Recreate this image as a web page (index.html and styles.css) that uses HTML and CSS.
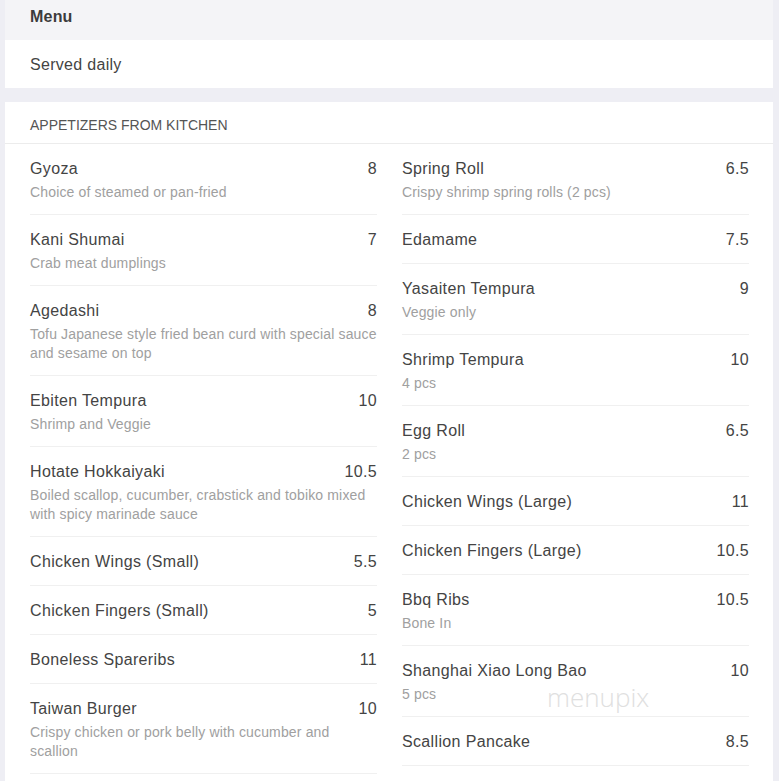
FILE: index.html
```html
<!DOCTYPE html>
<html lang="en">
<head>
<meta charset="utf-8">
<title>Menu</title>
<link rel="stylesheet" href="styles.css">
</head>
<body>
<div class="page">
  <div class="menu-head">Menu</div>
  <div class="card served">Served daily</div>
  <div class="card section">
    <div class="section-title">APPETIZERS FROM KITCHEN</div>
    <div class="columns">
      <div class="col">
        <div class="item"><div class="row"><span class="name">Gyoza</span><span class="price">8</span></div><div class="desc">Choice of steamed or pan-fried</div></div>
        <div class="item"><div class="row"><span class="name">Kani Shumai</span><span class="price">7</span></div><div class="desc">Crab meat dumplings</div></div>
        <div class="item"><div class="row"><span class="name">Agedashi</span><span class="price">8</span></div><div class="desc">Tofu Japanese style fried bean curd with special sauce and sesame on top</div></div>
        <div class="item"><div class="row"><span class="name">Ebiten Tempura</span><span class="price">10</span></div><div class="desc">Shrimp and Veggie</div></div>
        <div class="item"><div class="row"><span class="name">Hotate Hokkaiyaki</span><span class="price">10.5</span></div><div class="desc">Boiled scallop, cucumber, crabstick and tobiko mixed with spicy marinade sauce</div></div>
        <div class="item"><div class="row"><span class="name">Chicken Wings (Small)</span><span class="price">5.5</span></div></div>
        <div class="item"><div class="row"><span class="name">Chicken Fingers (Small)</span><span class="price">5</span></div></div>
        <div class="item"><div class="row"><span class="name">Boneless Spareribs</span><span class="price">11</span></div></div>
        <div class="item"><div class="row"><span class="name">Taiwan Burger</span><span class="price">10</span></div><div class="desc">Crispy chicken or pork belly with cucumber and scallion</div></div>
      </div>
      <div class="col">
        <div class="item"><div class="row"><span class="name">Spring Roll</span><span class="price">6.5</span></div><div class="desc">Crispy shrimp spring rolls (2 pcs)</div></div>
        <div class="item"><div class="row"><span class="name">Edamame</span><span class="price">7.5</span></div></div>
        <div class="item"><div class="row"><span class="name">Yasaiten Tempura</span><span class="price">9</span></div><div class="desc">Veggie only</div></div>
        <div class="item"><div class="row"><span class="name">Shrimp Tempura</span><span class="price">10</span></div><div class="desc">4 pcs</div></div>
        <div class="item"><div class="row"><span class="name">Egg Roll</span><span class="price">6.5</span></div><div class="desc">2 pcs</div></div>
        <div class="item"><div class="row"><span class="name">Chicken Wings (Large)</span><span class="price">11</span></div></div>
        <div class="item"><div class="row"><span class="name">Chicken Fingers (Large)</span><span class="price">10.5</span></div></div>
        <div class="item"><div class="row"><span class="name">Bbq Ribs</span><span class="price">10.5</span></div><div class="desc">Bone In</div></div>
        <div class="item"><div class="row"><span class="name">Shanghai Xiao Long Bao</span><span class="price">10</span></div><div class="desc">5 pcs</div></div>
        <div class="item"><div class="row"><span class="name">Scallion Pancake</span><span class="price">8.5</span></div></div>
      </div>
    </div>
    <div class="watermark">menupix</div>
  </div>
</div>
</body>
</html>
```
FILE: styles.css
```css
html, body {
  margin: 0;
  padding: 0;
}
body {
  background: #eeeef4;
  font-family: "Liberation Sans", Arial, sans-serif;
  color: #444;
}
.page {
  margin-left: 5px;
  width: 768px;
}
.menu-head {
  background: #f4f4f7;
  height: 40px;
  box-sizing: border-box;
  padding: 6px 25px 0;
  font-size: 16px;
  line-height: 22px;
  font-weight: bold;
  color: #3c3c3c;
  letter-spacing: 0.2px;
}
.card {
  background: #fff;
}
.served {
  height: 48px;
  box-sizing: border-box;
  padding: 14px 25px 0;
  font-size: 16px;
  line-height: 22px;
  color: #444;
  letter-spacing: 0.3px;
  margin-bottom: 14px;
}
.section {
  position: relative;
  padding-bottom: 24px;
}
.section-title {
  padding: 14px 25px 9px;
  font-size: 14px;
  line-height: 18px;
  color: #555;
  border-bottom: 1px solid #ececec;
}
.columns {
  display: grid;
  grid-template-columns: 347px 347px;
  column-gap: 25px;
  padding: 0 23px 0 25px;
}
.item {
  padding: 14px 0 12px;
  border-bottom: 1px solid #f0f0f0;
}
.row {
  display: flex;
  justify-content: space-between;
  font-size: 16px;
  line-height: 22px;
  color: #444;
  letter-spacing: 0.35px;
}
.desc {
  margin-top: 3px;
  font-size: 14px;
  line-height: 19px;
  color: #a0a0a0;
  letter-spacing: 0.15px;
}
.watermark {
  position: absolute;
  left: 542px;
  top: 577px;
  font-family: "Open Sans", sans-serif;
  font-weight: 300;
  font-size: 26px;
  color: #e0e0e0;
  pointer-events: none;
}
```
